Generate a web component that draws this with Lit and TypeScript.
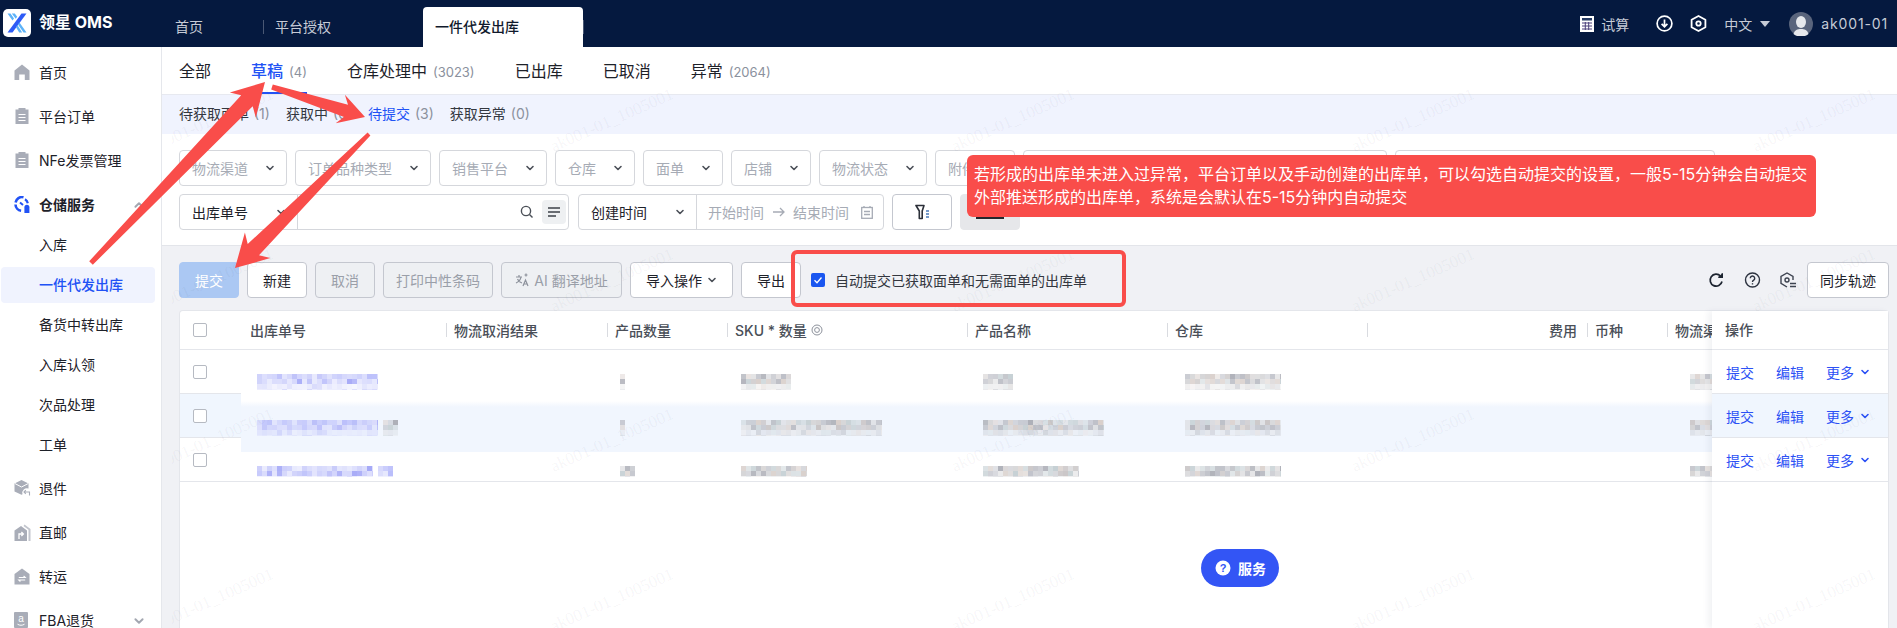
import { LitElement, css, html, svg } from 'lit';
import { customElement } from 'lit/decorators.js';

const chevron = (size = 10, color = '#4b5058') => html`<svg width=${size} height=${size} viewBox="0 0 10 10" fill="none"><path d="M2 3.5 5 6.5 8 3.5" stroke=${color} stroke-width="1.6" stroke-linecap="round" stroke-linejoin="round"/></svg>`;

// pixelated stand-in for the blurred cell values
function mosaic(w: number, kind: 'blue' | 'gray', seed: number, h = 16) {
  let s = seed * 7919 + 13;
  const rnd = () => {
    s = (s * 1103515245 + 12345) & 0x7fffffff;
    return s / 0x7fffffff;
  };
  const rects = [];
  const palette = kind === 'blue'
    ? ['#b9bdfb', '#c8cbfb', '#d6d8fc', '#a5a9f7', '#cfd2fb']
    : ['#c9c5c6', '#d6d6d8', '#bdbfc7', '#d9d0cc', '#c6d0d4', '#aeb0b8'];
  for (let y = 0; y < h; y += 5) {
    for (let x = 0; x < w; x += 5) {
      const fade = y >= 10 ? 0.45 : 1;
      rects.push(svg`<rect x=${x} y=${y} width="5" height="5" fill=${palette[Math.floor(rnd() * palette.length)]} opacity=${(0.45 + rnd() * 0.55) * fade}/>`);
    }
  }
  return html`<svg class="mosaic" width=${w} height=${h} viewBox="0 0 ${w} ${h}">${rects}</svg>`;
}

function arrow(x1: number, y1: number, x2: number, y2: number, head: number, headW: number, tailW: number, neckW: number) {
  const len = Math.hypot(x2 - x1, y2 - y1);
  const ux = (x2 - x1) / len;
  const uy = (y2 - y1) / len;
  const nx = -uy;
  const ny = ux;
  const bx = x2 - ux * head;
  const by = y2 - uy * head;
  // barbs sit slightly behind the neck, like a marker-tool arrow
  const cx = x2 - ux * (head - 6);
  const cy = y2 - uy * (head - 6);
  const pts = [
    [x1 + (nx * tailW) / 2, y1 + (ny * tailW) / 2],
    [cx + (nx * neckW) / 2, cy + (ny * neckW) / 2],
    [bx + (nx * headW) / 2, by + (ny * headW) / 2],
    [x2, y2],
    [bx - (nx * headW) / 2, by - (ny * headW) / 2],
    [cx - (nx * neckW) / 2, cy - (ny * neckW) / 2],
    [x1 - (nx * tailW) / 2, y1 - (ny * tailW) / 2],
  ];
  return svg`<polygon points=${pts.map((p) => p.map((v) => v.toFixed(1)).join(',')).join(' ')} fill="#f94d4a"/>`;
}

const icons: Record<string, unknown> = {
  home: html`<svg width="16" height="16" viewBox="0 0 16 16"><path d="M8 .5 15.5 6.6V16h-4.7v-5.6H5.2V16H.5V6.6Z" fill="#a9adb8"/></svg>`,
  clip: html`<svg width="16" height="16" viewBox="0 0 16 16"><path d="M1.5 1.5h3V0h7v1.5h3V16h-13Z" fill="#a9adb8"/><path d="M4.5 6.5h7M4.5 9.5h7M4.5 12.5h7" stroke="#fff" stroke-width="1.2"/></svg>`,
  ware: html`<svg width="17" height="17" viewBox="0 0 17 17" fill="none"><path d="M9.5 1.2A6.5 6.5 0 0 0 1.6 6.4" stroke="#2152f5" stroke-width="2.6"/><path d="M1.5 8.5a6.5 6.5 0 0 0 5.6 6.2" stroke="#2152f5" stroke-width="2.6"/><path d="M11 3.2a6 6 0 0 1 2.8 4" stroke="#2152f5" stroke-width="2.2"/><path d="M10.4 11.2a2.5 2.5 0 0 1 5 0V17h-5Z" fill="#2152f5"/><path d="M6 6.4 9 9" stroke="#2152f5" stroke-width="2"/></svg>`,
  back: html`<svg width="17" height="17" viewBox="0 0 17 17"><path d="M7.5 0 14.5 3.4V8.6a4.6 4.6 0 0 0-6 5.6L7.5 14.8.5 11.4V3.4Z" fill="#a9adb8"/><path d="M1 3.6 7.5 7l6.6-3.4" stroke="#fff" stroke-width="1" fill="none"/><path d="M10 12h5.5v3.6M11.8 10.2 10 12l1.8 1.8" stroke="#a9adb8" stroke-width="1.1" fill="none"/></svg>`,
  direct: html`<svg width="17" height="17" viewBox="0 0 17 17"><path d="M7 2 13 6.6V17H.5V6.6Z" fill="#a9adb8"/><path d="M10.5.5 16.5 5V17h-2V5.8L9.5 2Z" fill="#c3c6ce"/><path d="M5 15v-5h4M7.4 8 9.4 10l-2 2" stroke="#fff" stroke-width="1.3" fill="none"/></svg>`,
  transfer: html`<svg width="16" height="17" viewBox="0 0 16 17"><path d="M8 .5 15.5 6V16.5H.5V6Z" fill="#a9adb8"/><path d="M4.8 9.5h6.4L9.6 8M11.2 12H4.8l1.6 1.5" stroke="#fff" stroke-width="1.1" fill="none"/></svg>`,
  fba: html`<svg width="14" height="16" viewBox="0 0 14 16"><rect width="14" height="16" rx="1" fill="#a9adb8"/><text x="7" y="10" font-size="10" font-family="Liberation Sans, sans-serif" fill="#fff" text-anchor="middle">a</text><path d="M3.5 12.2c2 1.4 5 1.4 7 0" stroke="#fff" fill="none"/></svg>`,
};

interface NavItem { label: string; icon?: string; bold?: boolean; active?: boolean; child?: boolean; arrow?: 'up' | 'down'; }

const nav: NavItem[] = [
  { label: '首页', icon: 'home' },
  { label: '平台订单', icon: 'clip' },
  { label: 'NFe发票管理', icon: 'clip' },
  { label: '仓储服务', icon: 'ware', bold: true, arrow: 'up' },
  { label: '入库', child: true },
  { label: '一件代发出库', child: true, active: true },
  { label: '备货中转出库', child: true },
  { label: '入库认领', child: true },
  { label: '次品处理', child: true },
  { label: '工单', child: true },
  { label: '退件', icon: 'back' },
  { label: '直邮', icon: 'direct' },
  { label: '转运', icon: 'transfer' },
  { label: 'FBA退货', icon: 'fba', arrow: 'down' },
];

const filters: [string, number][] = [
  ['物流渠道', 108], ['订单品种类型', 136], ['销售平台', 108], ['仓库', 80], ['面单', 80],
  ['店铺', 80], ['物流状态', 108], ['附件', 80],
];

const columns: { label: unknown; w: number; right?: boolean }[] = [
  { label: '', w: 61 },
  { label: '出库单号', w: 205 },
  { label: '物流取消结果', w: 161 },
  { label: '产品数量', w: 120 },
  { label: html`SKU * 数量 <svg class="tip" width="12" height="12" viewBox="0 0 12 12" fill="none"><circle cx="6" cy="6" r="5" stroke="#8d929c"/><circle cx="6" cy="6" r="2.4" stroke="#8d929c"/></svg>`, w: 240 },
  { label: '产品名称', w: 200 },
  { label: '仓库', w: 200 },
  { label: '费用', w: 220, right: true },
  { label: '币种', w: 80 },
  { label: '物流渠', w: 45 },
];

// x inside the column, width, colour family per cell
const rows = [
  { top: 24, h: 16, cells: [[16, 121, 'blue'], [0, 0, ''], [13, 5, 'gray'], [14, 50, 'gray'], [16, 30, 'gray'], [18, 96, 'gray'], [0, 0, ''], [0, 0, ''], [23, 22, 'gray']], chip: '' },
  { top: 26, h: 16, cells: [[16, 121, 'blue'], [0, 0, ''], [13, 5, 'gray'], [14, 141, 'gray'], [16, 121, 'gray'], [18, 96, 'gray'], [0, 0, ''], [0, 0, ''], [23, 22, 'gray']], chip: 'gray' },
  { top: 28, h: 11, cells: [[16, 116, 'blue'], [0, 0, ''], [13, 15, 'gray'], [14, 66, 'gray'], [16, 96, 'gray'], [18, 96, 'gray'], [0, 0, ''], [0, 0, ''], [23, 22, 'gray']], chip: 'blue' },
];

@customElement('app-root')
export class AppRoot extends LitElement {
  static styles = css`
    :host {
      display: block;
      position: relative;
      height: 628px;
      overflow: hidden;
      font-family: Inter, "Noto Sans CJK SC", sans-serif;
      font-size: 14px;
      color: #1d2129;
      background: #f0f1f5;
    }
    * { box-sizing: border-box; }
    .top {
      height: 47px;
      background: #05193f;
      display: flex;
      align-items: stretch;
      color: #c6cbd6;
    }
    .logo {
      width: 28px;
      height: 28px;
      margin: 9px 8px 0 3px;
      background: #fff;
      border-radius: 5px;
      flex: none;
    }
    .brand { color: #fff; font-weight: 700; font-size: 16px; line-height: 44px; width: 136px; white-space: nowrap; }
    .ttab { position: relative; line-height: 54px; white-space: nowrap; }
    .ttab.home { width: 100px; }
    .ttab.auth { width: 148px; }
    .ttab.auth::before { content: ""; position: absolute; left: -12px; top: 20px; height: 14px; width: 1px; background: #4a5874; }
    .ttab.cur {
      width: 160px;
      margin-top: 7px;
      padding-left: 12px;
      line-height: 40px;
      background: #fff;
      color: #10192c;
      border-radius: 4px 4px 0 0;
      font-weight: 500;
    }
    .tsep { width: 1px; height: 14px; margin-top: 20px; background: #4a5874; }
    .tright { margin-left: auto; display: flex; align-items: center; padding-right: 9px; white-space: nowrap; }
    .tright .calc { margin-right: 7px; }
    .tright .tr { margin-right: 27px; }
    .tright .ic2 { margin-right: 17px; display: block; }
    .tright .cn { margin-right: 8px; }
    .user { letter-spacing: 0.85px; }
    .caret { width: 0; height: 0; border: 5px solid transparent; border-top: 6px solid #c6cbd6; border-bottom: 0; margin-right: 19px; }
    .avatar { width: 24px; height: 24px; margin-right: 8px; display: block; }

    .layout { display: flex; height: 581px; }
    .side { width: 162px; flex: none; background: #fff; border-right: 1px solid #e5e7ec; padding-top: 3px; }
    .nav { height: 44px; display: flex; align-items: center; padding-left: 14px; white-space: nowrap; position: relative; }
    .nav .ico { width: 25px; display: flex; }
    .nav.bold { font-weight: 700; }
    .nav .end { position: absolute; left: 133px; top: 17px; display: flex; }
    .nav .end.up { transform: rotate(180deg); }
    .nav.child { height: 40px; padding-left: 39px; }
    .nav.child.first { margin-top: -2px; }
    .nav.child.last { margin-bottom: 2px; }
    .nav.active::before {
      content: "";
      position: absolute;
      left: 1px;
      width: 154px;
      top: 3px;
      bottom: 1px;
      background: #f0f3fe;
      border-radius: 4px;
    }
    .nav.active span { position: relative; color: #2152f5; font-weight: 500; }

    .main { flex: 1; min-width: 0; display: flex; flex-direction: column; }
    .tabs { height: 48px; background: #fff; display: flex; gap: 40px; padding-left: 17px; border-bottom: 1px solid #e7e9f0; font-size: 16px; line-height: 49px; white-space: nowrap; }
    .tab { position: relative; }
    .tab.on { color: #2152f5; font-weight: 500; }
    .tab.on::after { content: ""; position: absolute; left: 0; right: 0; bottom: 0; height: 2px; background: #2152f5; }
    .count { color: #8b919d; font-size: 13px; font-weight: 400; margin-left: 6px; }
    .subs { height: 39px; background: #f0f3fe; display: flex; gap: 16px; padding-left: 17px; line-height: 38px; white-space: nowrap; color: #33373f; }
    .subs .on { color: #2152f5; }
    .subs .count { margin-left: 5px; font-size: 14px; }

    .filters { background: #fff; height: 112px; padding: 16px 0 0 17px; border-bottom: 1px solid #e3e5ea; display: flex; flex-direction: column; gap: 8px; }
    .frow { display: flex; gap: 8px; }
    .ctl {
      height: 36px;
      border: 1px solid #d5d7dc;
      border-radius: 4px;
      background: #fff;
      display: flex;
      align-items: center;
      flex: none;
      color: #a6abb5;
      white-space: nowrap;
    }
    .sel { display: flex; align-items: center; justify-content: space-between; padding: 0 11px 0 12px; height: 100%; }
    .sel.dark { color: #1d2129; border-right: 1px solid #d5d7dc; }
    .wide { width: 364px; }
    .wide2 { width: 320px; }
    .search { margin-right: 1px; width: 390px; }
    .search .grow { flex: 1; display: flex; align-items: center; justify-content: flex-end; padding-right: 2px; gap: 8px; }
    .lines { width: 24px; height: 24px; background: #eef0f2; border-radius: 4px; display: flex; align-items: center; justify-content: center; }
    .date { width: 306px; }
    .date .val { display: flex; align-items: center; flex: 1; padding: 0 10px 0 11px; color: #a6abb5; }
    .date .to { margin: 0 8px 0 9px; display: flex; }
    .date .cal { margin-left: auto; display: flex; }
    .sq { width: 60px; height: 36px; border: 1px solid #c4c7cf; border-radius: 4px; background: #fff; display: flex; align-items: center; justify-content: center; flex: none; }
    .sq.gray { background: #e6e7ea; border-color: #e6e7ea; align-items: flex-end; padding-bottom: 10px; }
    .sq.gray i { display: block; width: 28px; height: 2px; background: #23262c; }

    .bar { height: 64px; flex: none; display: flex; align-items: flex-start; padding: 16px 8px 0 17px; gap: 8px; white-space: nowrap; }
    .btn { height: 36px; border: 1px solid #c4c7cf; border-radius: 4px; background: #fff; display: flex; align-items: center; justify-content: center; flex: none; gap: 5px; color: #1d2129; }
    .btn.prim { background: #abc8f3; border-color: #abc8f3; color: #fff; width: 60px; }
    .btn.off { background: #eef0f3; color: #9a9fa9; }
    .w60 { width: 60px; }
    .w103 { width: 103px; }
    .w110 { width: 110px; }
    .w121 { width: 121px; }
    .check { margin-left: 2px; height: 36px; display: flex; align-items: center; gap: 10px; color: #33373f; }
    .box { width: 14px; height: 14px; border-radius: 2px; background: #1a56f0; display: flex; flex: none; }
    .bar .right { margin-left: auto; display: flex; align-items: center; gap: 19px; }
    .bar .right .btn { width: 82px; margin-left: -9px; }
    .bar .right svg { display: block; }

    .card { flex: 1; margin: 0 8px 0 17px; background: #fff; border: 1px solid #e4e6eb; border-bottom: 0; border-radius: 4px 4px 0 0; display: flex; min-height: 0; }
    .scroll { flex: 1; min-width: 0; overflow: hidden; position: relative; }
    .patch { position: absolute; left: 61px; right: 0; top: 90px; height: 51px; background: linear-gradient(#fff, #f1f6fe 6px); }
    .grid { display: flex; width: 1532px; position: relative; }
    .head { height: 39px; border-bottom: 1px solid #e4e6eb; align-items: center; font-weight: 500; color: #4a4f58; white-space: nowrap; }
    .hc { position: relative; padding-left: 8px; height: 20px; display: flex; align-items: center; flex: none; }
    .hc.first { padding-left: 9px; }
    .hc.lined::before { content: ""; position: absolute; left: 0; top: 3px; bottom: 3px; width: 1px; background: #d9dbe0; }
    .hc.right { justify-content: flex-end; padding-right: 10px; }
    .tip { margin-left: 4px; }
    .cb { width: 14px; height: 14px; border: 1px solid #b6bac2; border-radius: 2px; background: #fff; margin-left: 13px; flex: none; }
    .row { height: 44px; }
    .row.last { border-bottom: 1px solid #e4e6eb; }
    .cell { flex: none; }
    .cell0 { width: 61px; height: 44px; display: flex; align-items: center; border-bottom: 1px solid #e4e6eb; margin-bottom: -1px; }
    .row.hover .cell0 { background: #f0f6fe; }
    .mosaic { display: block; }
    .mwrap { display: flex; gap: 5px; }

    .fixed { width: 176px; flex: none; box-shadow: -4px 0 6px rgba(40, 50, 80, 0.06); position: relative; background: #fff; }
    .fhead { height: 39px; border-bottom: 1px solid #e4e6eb; padding-left: 13px; line-height: 38px; font-weight: 500; color: #4a4f58; }
    .act { height: 44px; border-bottom: 1px solid #e4e6eb; display: flex; align-items: center; padding-left: 14px; gap: 22px; color: #2b50f5; white-space: nowrap; }
    .act.hover { background: #f0f6fe; }
    .act .more { display: flex; align-items: center; gap: 6px; }

    .wm { position: absolute; left: 172px; top: 47px; right: 0; bottom: 0; display: grid; grid-template-columns: repeat(5, 400.4px); grid-auto-rows: 160px; pointer-events: none; overflow: hidden; }
    .wm span { display: block; width: 134px; margin-top: 42px; transform: rotate(-24deg); transform-origin: 0 50%; translate: 0 45px; font-family: "Liberation Serif", serif; font-size: 17px; line-height: 18px; color: rgba(40, 50, 70, 0.055); white-space: nowrap; }
    .marks { position: absolute; inset: 0; pointer-events: none; }
    .hl { position: absolute; left: 791px; top: 250px; width: 335px; height: 57px; border: 4px solid #f94d4a; border-radius: 6px; pointer-events: none; }
    .note { position: absolute; left: 967px; top: 155px; width: 849px; height: 62px; padding: 8px 7px; border-radius: 6px; background: #f94d4a; color: #fff; font-size: 16px; line-height: 23px; white-space: nowrap; }
    .service { position: absolute; left: 1201px; top: 549px; width: 78px; height: 38px; border-radius: 19px; background: #3355f5; color: #fff; font-weight: 700; display: flex; align-items: center; padding-left: 14px; gap: 7px; }
  `;

  private renderNav() {
    return nav.map((n, i) => {
      const first = n.child && !nav[i - 1].child;
      const last = n.child && !nav[i + 1].child;
      const cls = `nav ${n.bold ? 'bold' : ''} ${n.child ? 'child' : ''} ${n.active ? 'active' : ''} ${first ? 'first' : ''} ${last ? 'last' : ''}`;
      return html`<div class=${cls}>
        ${n.icon ? html`<div class="ico">${icons[n.icon]}</div>` : ''}
        <span>${n.label}</span>
        ${n.arrow ? html`<div class="end ${n.arrow}">${chevron(12, '#a3a7b1')}</div>` : ''}
      </div>`;
    });
  }

  private renderHeader() {
    return html`<header class="top">
      <div class="logo">
        <svg width="28" height="28" viewBox="0 0 28 28">
          <path d="M18.5 4.5h5L9.5 23.5h-5Z" fill="#2d5bf6"/>
          <path d="M4.5 4.5h3L11 9.5l-1.5 2ZM8.8 4.5h3l2.4 3.3-1.5 2Z" fill="#5cb2f8"/>
          <path d="M15 15.5l1.5-2 7 10h-3ZM13 18.2l1.5-2 4.7 7.3h-3Z" fill="#5cb2f8"/>
        </svg>
      </div>
      <div class="brand">领星 OMS</div>
      <div class="ttab home">首页</div>
      <div class="ttab auth">平台授权</div>
      <div class="ttab cur">一件代发出库</div>
      <div class="tsep"></div>
      <div class="tright">
        <svg class="calc" width="14" height="16" viewBox="0 0 14 16"><rect width="14" height="16" fill="#fff"/><rect x="2" y="2" width="10" height="2.5" fill="#263a63"/><path d="M2 7h10M2 10h10M2 13h10M5.3 6v8M8.7 6v8" stroke="#4a3f7a"/></svg>
        <span class="tr">试算</span>
        <svg class="ic2" width="17" height="17" viewBox="0 0 17 17" fill="none" stroke="#fff" stroke-width="1.7"><circle cx="8.5" cy="8.5" r="7.4"/><path d="M8.5 4.5v7M5.6 8.8l2.9 2.9 2.9-2.9"/></svg>
        <svg class="ic2" width="17" height="17" viewBox="0 0 17 17" fill="none" stroke="#fff" stroke-width="1.8"><path d="M8.5 1 15.4 4.8v7.4L8.5 16 1.6 12.2V4.8Z" stroke-linejoin="round"/><circle cx="8.5" cy="8.5" r="2.2"/></svg>
        <span class="cn">中文</span>
        <div class="caret"></div>
        <svg class="avatar" viewBox="0 0 24 24"><circle cx="12" cy="12" r="12" fill="#59647c"/><ellipse cx="12" cy="10" rx="5" ry="6" fill="#e6e8ec"/><path d="M4.5 22c1-4 4-5 7.500-5s6.500 1 7.500 5a12 12 0 0 1-15 0Z" fill="#e6e8ec"/></svg>
        <span class="user">ak001-01</span>
      </div>
    </header>`;
  }

  private renderFilters() {
    const search = html`<svg width="14" height="14" viewBox="0 0 14 14" fill="none" stroke="#4b5058" stroke-width="1.4"><circle cx="6" cy="6" r="4.6"/><path d="M9.500 9.500 12.500 12.500"/></svg>`;
    return html`<section class="filters">
      <div class="frow">
        ${filters.map(([t, w]) => html`<div class="ctl" style="width:${w}px"><div class="sel" style="width:100%"><span>${t}</span>${chevron()}</div></div>`)}
        <div class="ctl wide"></div>
        <div class="ctl wide2"></div>
      </div>
      <div class="frow">
        <div class="ctl search">
          <div class="sel dark" style="width:118px"><span>出库单号</span>${chevron()}</div>
          <div class="grow">${search}<div class="lines"><svg width="12" height="10" viewBox="0 0 12 10" stroke="#3c4048" stroke-width="1.5"><path d="M0 1h12M0 5h12M0 9h8"/></svg></div></div>
        </div>
        <div class="ctl date">
          <div class="sel dark" style="width:118px"><span>创建时间</span>${chevron()}</div>
          <div class="val"><span>开始时间</span><span class="to"><svg width="12" height="10" viewBox="0 0 12 10" fill="none" stroke="#a6abb5" stroke-width="1.3"><path d="M0 5h11M7 1l4 4-4 4"/></svg></span><span>结束时间</span>
            <span class="cal"><svg width="12" height="13" viewBox="0 0 12 13" fill="none" stroke="#a6abb5" stroke-width="1.3"><rect x=".7" y="1.500" width="10.600" height="10.800"/><path d="M3 0v2M9 0v2M3 5.500h6M3 8.500h6"/></svg></span>
          </div>
        </div>
        <div class="sq"><svg width="15" height="16" viewBox="0 0 15 16" fill="none"><path d="M1 1.500h8L7.200 7v7.500H4.300V7Z" stroke="#2b2f38" stroke-width="1.6" stroke-linejoin="round"/><path d="M11 7h3M11 10h3M11 13h3" stroke="#4a7ab8" stroke-width="1.4"/></svg></div>
        <div class="sq gray"><i></i></div>
      </div>
    </section>`;
  }

  private renderBar() {
    return html`<section class="bar">
      <div class="btn prim">提交</div>
      <div class="btn w60">新建</div>
      <div class="btn off w60">取消</div>
      <div class="btn off w110">打印中性条码</div>
      <div class="btn off w121"><svg width="14" height="14" viewBox="0 0 14 14" fill="none" stroke="#8d929c" stroke-width="1.2"><path d="M1 4h6M4 2v2M6 4c-.5 3-2.500 5-5 6M2.500 6c.8 2 2.500 3.500 4.500 4M8 13l2.500-6 2.500 6M9 11h3"/><path d="M11 .5v3M9.500 2h3"/></svg>AI 翻译地址</div>
      <div class="btn w103">导入操作 ${chevron()}</div>
      <div class="btn w60">导出</div>
      <div class="check">
        <span class="box"><svg width="14" height="14" viewBox="0 0 14 14" fill="none"><path d="M3.500 7.200 6 9.700 10.500 4.500" stroke="#fff" stroke-width="1.300"/></svg></span>
        <span>自动提交已获取面单和无需面单的出库单</span>
      </div>
      <div class="right">
        <svg width="17" height="36" viewBox="0 -10 17 36" fill="none" stroke="#1d2430" stroke-width="1.7"><path d="M14 9.500A6 6 0 1 1 12.500 4"/><path d="M14.300 1.200v4h-4" stroke-width="1.400" fill="#1d2430"/></svg>
        <svg width="17" height="36" viewBox="0 -10 17 36" fill="none" stroke="#2d3340" stroke-width="1.400"><circle cx="8.500" cy="8" r="7"/><path d="M6.300 6.300a2.200 2.200 0 1 1 3.400 1.800c-.8.500-1.200 1-1.200 1.900"/><path d="M8.500 11.200v1.300"/></svg>
        <svg width="17" height="36" viewBox="0 -10 17 36" fill="none" stroke="#3d4350" stroke-width="1.400"><path d="M13 8V4.400L7 1 1 4.400v7L7 15"/><circle cx="7" cy="8" r="2"/><path d="M10 11.500h6M10 14.500h6"/></svg>
        <div class="btn">同步轨迹</div>
      </div>
    </section>`;
  }

  private renderTable() {
    return html`<section class="card">
      <div class="scroll">
        <div class="patch"></div>
        <div class="grid head">
          ${columns.map((c, i) => i === 0
            ? html`<div class="cell" style="width:${c.w}px"><div class="cb"></div></div>`
            : html`<div class="hc ${i > 1 ? 'lined' : 'first'} ${c.right ? 'right' : ''}" style="width:${c.w}px">${c.label}</div>`)}
        </div>
        ${rows.map((r, ri) => html`<div class="grid row ${ri === 1 ? 'hover' : ''} ${ri === 2 ? 'last' : ''}">
          <div class="cell0"><div class="cb"></div></div>
          ${r.cells.map((c, ci) => {
            const width = columns[ci + 1].w;
            const [x, w, kind] = c as [number, number, 'blue' | 'gray'];
            return html`<div class="cell mwrap" style="width:${width}px;padding-left:${x}px;padding-top:${r.top}px">
              ${w ? mosaic(w, kind, ri * 20 + ci + 1, r.h) : ''}
              ${ci === 0 && r.chip ? mosaic(15, r.chip as 'blue' | 'gray', ri + 40, r.h) : ''}
            </div>`;
          })}
        </div>`)}
      </div>
      <div class="fixed">
        <div class="fhead">操作</div>
        ${rows.map((_, i) => html`<div class="act ${i === 1 ? 'hover' : ''}"><span>提交</span><span>编辑</span><span class="more">更多 ${chevron(10, '#2b50f5')}</span></div>`)}
      </div>
    </section>`;
  }

  render() {
    const marks = Array.from({ length: 20 });
    return html`
      ${this.renderHeader()}
      <div class="layout">
        <nav class="side">${this.renderNav()}</nav>
        <main class="main">
          <div class="tabs">
            <div class="tab">全部</div>
            <div class="tab on">草稿<span class="count">(4)</span></div>
            <div class="tab">仓库处理中<span class="count">(3023)</span></div>
            <div class="tab">已出库</div>
            <div class="tab">已取消</div>
            <div class="tab">异常<span class="count">(2064)</span></div>
          </div>
          <div class="subs">
            <div>待获取面单<span class="count">(1)</span></div>
            <div>获取中<span class="count">(0)</span></div>
            <div class="on">待提交<span class="count">(3)</span></div>
            <div>获取异常<span class="count">(0)</span></div>
          </div>
          ${this.renderFilters()}
          ${this.renderBar()}
          ${this.renderTable()}
        </main>
      </div>
      <div class="wm">${marks.map(() => html`<span>ak001-01_1005001</span>`)}</div>
      <div class="hl"></div>
      <div class="note">若形成的出库单未进入过异常，平台订单以及手动创建的出库单，可以勾选自动提交的设置，一般5-15分钟会自动提交<br />外部推送形成的出库单，系统是会默认在5-15分钟内自动提交</div>
      <div class="service">
        <svg width="16" height="16" viewBox="0 0 16 16"><circle cx="8" cy="8" r="7.500" fill="#fff"/><text x="8" y="12" font-size="11" font-weight="700" font-family="Liberation Sans, sans-serif" fill="#3355f5" text-anchor="middle">?</text></svg>
        <span>服务</span>
      </div>
      <svg class="marks" width="1897" height="628" viewBox="0 0 1897 628">
        ${arrow(91, 263, 265, 82, 32, 36, 5, 16)}
        ${arrow(272, 87, 365, 117, 26, 30, 5, 13)}
        ${arrow(369, 134, 235, 268, 32, 36, 4, 16)}
      </svg>
    `;
  }
}
